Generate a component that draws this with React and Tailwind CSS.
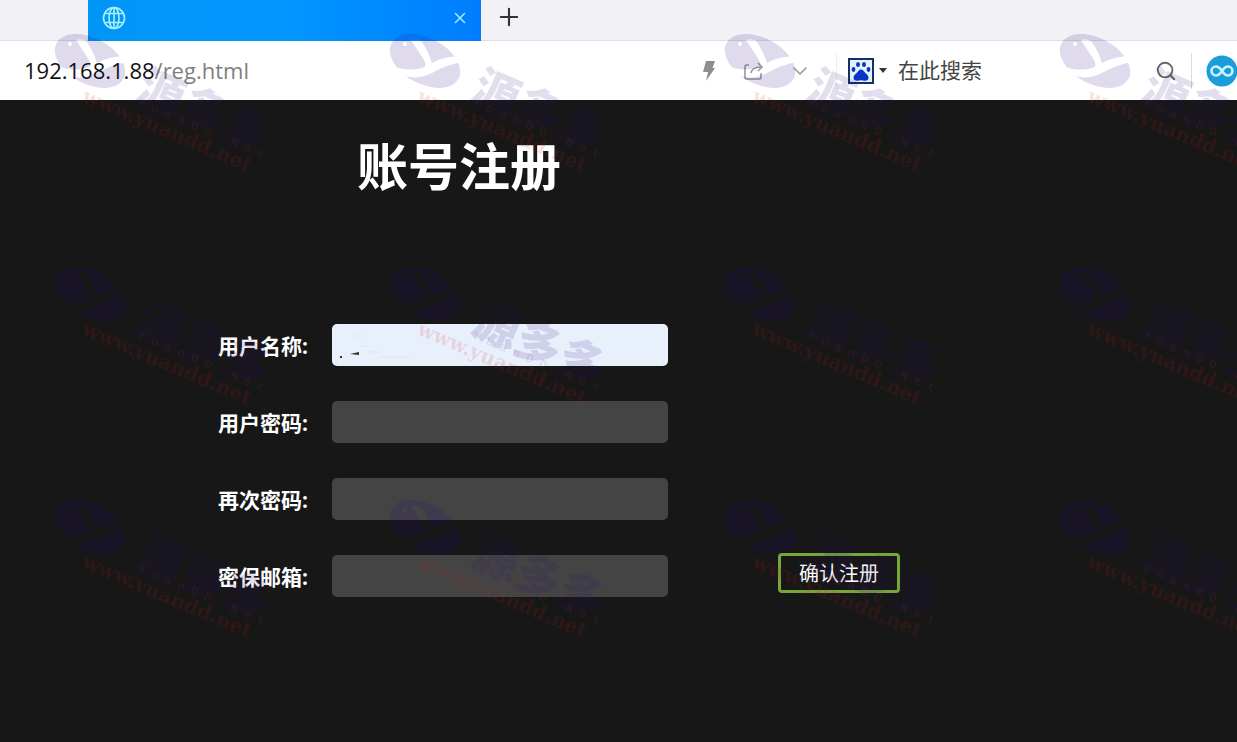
import { ChevronDown, Plus, Search, X } from "lucide-react";

const FIELDS = [
  { id: "username", label: "用户名称:", type: "text", filled: true },
  { id: "password", label: "用户密码:", type: "password" },
  { id: "password2", label: "再次密码:", type: "password" },
  { id: "email", label: "密保邮箱:", type: "email" },
];

const MARK_COLS = [55, 390, 725, 1060];
const MARK_ROWS = [34, 267, 500];

function GlobeIcon() {
  return (
    <svg viewBox="0 0 24 24" className="size-6" fill="none" stroke="#a9f0ff" strokeWidth="1.600" aria-hidden="true">
      <circle cx="12" cy="12" r="10.500" />
      <ellipse cx="12" cy="12" rx="5" ry="10.500" />
      <path d="M12 1.500v21M3 7.500h18M3 16.500h18" />
    </svg>
  );
}

function PawIcon() {
  return (
    <svg viewBox="0 0 26 26" className="size-[26px]" aria-hidden="true">
      <rect x="1" y="1" width="24" height="24" fill="#e4f2fc" stroke="#14306b" strokeWidth="2" />
      <g fill="#0b34c4">
        <ellipse cx="5.500" cy="11.500" rx="1.900" ry="2.400" />
        <ellipse cx="10" cy="6.500" rx="2" ry="2.500" />
        <ellipse cx="16" cy="6.500" rx="2" ry="2.500" />
        <ellipse cx="20.500" cy="11.500" rx="1.900" ry="2.400" />
        <path d="M13 11.500c-2 0-3 2-4.300 3.400C7 16.500 5.300 17.500 5.500 20c.2 2.300 2 3 4 2.700 1.200-.2 2.300-.5 3.500-.5s2.300.3 3.500.5c2 .3 3.800-.4 4-2.700.2-2.500-1.500-3.500-3.200-5.100C16 13.500 15 11.500 13 11.500z" />
      </g>
    </svg>
  );
}

function TabBar() {
  return (
    <div className="flex h-[41px] border-b border-[#dedee6] bg-[#f1f1f6] pl-[88px]">
      <div className="flex h-[41px] w-[393px] items-center justify-between bg-linear-to-r from-[#0096f6] via-[#0396ff] to-[#007dff] pb-1.5 pl-3.5 pr-3">
        <GlobeIcon />
        <button aria-label="关闭标签页">
          <X className="size-[18px] text-[#a4ecff]" strokeWidth={2} />
        </button>
      </div>
      <button aria-label="新标签页" className="ml-3.5 pb-1.5">
        <Plus className="size-7 text-[#333]" strokeWidth={1.8} />
      </button>
    </div>
  );
}

function AddressBar() {
  return (
    <div className="flex h-[59px] items-center bg-white pl-6 text-[#808080]">
      <div className="flex-1 text-[22px]">
        <span className="text-[#111]">192.168.1.88</span>/reg.html
      </div>
      <button aria-label="极速模式" className="mr-7">
        <svg viewBox="0 0 14 20" className="h-5 w-3.5" aria-hidden="true">
          <path d="M4 0h9L10.500 7H13L4 20l2-9H1z" fill="#8e8e8e" />
        </svg>
      </button>
      <button aria-label="分享" className="mr-6">
        <svg viewBox="0 0 20 18" className="h-[18px] w-5" fill="none" stroke="#999" strokeWidth="1.600" aria-hidden="true">
          <path d="M5 3H2.500Q1 3 1 4.500v11Q1 17 2.500 17h13q1.500 0 1.500-1.500V11" />
          <path d="M7 11c.5-4 3.500-6 11-6M14 1l4 4-4 4" />
        </svg>
      </button>
      <button aria-label="更多" className="mr-6">
        <ChevronDown className="size-6 text-[#999]" strokeWidth={1.6} />
      </button>
      <div className="flex h-9 w-[355px] items-center border-l border-[#eee] pl-[11px]">
        <button aria-label="选择搜索引擎" className="flex items-center gap-1">
          <PawIcon />
          <svg viewBox="0 0 10 6" className="h-1.5 w-2.5" aria-hidden="true">
            <path d="M1 0h8L5 5z" fill="#333" />
          </svg>
        </button>
        <input
          type="text"
          aria-label="搜索"
          placeholder="在此搜索"
          className="ml-2.5 min-w-0 flex-1 text-[21px] outline-none placeholder:text-[#444]"
        />
        <button aria-label="开始搜索" className="mr-3.5">
          <Search className="size-[22px] text-[#666]" strokeWidth={2} />
        </button>
      </div>
      <div className="flex h-9 w-[46px] items-center overflow-hidden border-l border-[#ddd] pl-3.5">
        <svg viewBox="0 0 32 32" className="size-8 shrink-0" aria-hidden="true">
          <circle cx="16" cy="16" r="15.500" fill="#1b9ddb" />
          <path
            d="M16 16c-2-3-3.500-4.500-6-4.500a4.500 4.500 0 0 0 0 9c2.500 0 4-1.500 6-4.500s3.500-4.500 6-4.500a4.500 4.500 0 0 1 0 9c-2.500 0-4-1.500-6-4.500z"
            fill="none"
            stroke="#c9f3ff"
            strokeWidth="2.600"
          />
        </svg>
      </div>
    </div>
  );
}

function Field({ id, label, type, filled }) {
  return (
    <div className="flex items-center">
      <label htmlFor={id} className="w-[114px] pt-1 text-[21px] font-bold text-white">
        {label}
      </label>
      <div className="relative">
        <input
          id={id}
          type={type}
          className={
            filled
              ? "block h-[42px] w-[336px] rounded-[5px] bg-[#e8f0fc] px-2 text-black"
              : "block h-[42px] w-[336px] rounded-[5px] bg-[#444] px-2 text-white"
          }
        />
        {filled && (
          <svg viewBox="0 0 80 42" className="pointer-events-none absolute left-0 top-0 h-[42px] w-20" aria-hidden="true">
            <path d="M8 32h2v2H8zM18 30l9-2v3z" fill="#333" />
            <path d="M22 12h8M36 28h10M48 33h30M30 22h8" stroke="#dfe4f0" />
          </svg>
        )}
      </div>
    </div>
  );
}

// Tilted logo + site name, repeated over the whole window
function Watermark() {
  return (
    <svg className="pointer-events-none absolute inset-0 size-full" aria-hidden="true">
      <defs>
        <mask id="logo-cut" maskUnits="userSpaceOnUse" x="-10" y="-10" width="100" height="80">
          <rect x="-10" y="-10" width="100" height="80" fill="#fff" />
          <circle cx="15" cy="10" r="2" fill="#000" />
          <path d="M0 31Q18 39 35 33Q36 30 34 26L21 6Q26 4 31 7Q38 16 42 29Q54 22 72 22V28Q56 31 44 38Q28 47 12 41Q6 39 0 33z" fill="#000" />
        </mask>
      </defs>
      {MARK_ROWS.map((y) =>
        MARK_COLS.map((x) => (
          <g key={`${x}-${y}`} transform={`translate(${x} ${y})`}>
            <g mask="url(#logo-cut)">
              <ellipse cx="35" cy="27" rx="38" ry="23" transform="rotate(28 35 27)" fill="#2d0888" opacity="0.15" />
            </g>
            <text transform="translate(79 65) rotate(23)" className="text-[46px] font-black" fill="#2d0878" opacity="0.13">
              源多多
            </text>
            <text transform="translate(82 71) rotate(23)" className="font-['Liberation_Mono'] text-[12px]" fill="#b03050" opacity="0.16">
              Y u a n D D . N e t
            </text>
            <text transform="translate(26 67) rotate(23)" className="font-['DejaVu_Serif'] text-[20px] font-bold" fill="#d01818" opacity="0.13">
              www.yuandd.net
            </text>
          </g>
        ))
      )}
    </svg>
  );
}

export default function App() {
  return (
    <div className="relative flex min-h-screen flex-col overflow-hidden font-['Open_Sans','Noto_Sans_CJK_SC',sans-serif]">
      <TabBar />
      <AddressBar />
      <main className="flex-1 bg-[#171717] pb-16 pt-8">
        <h1 className="pl-[357px] text-[51px] leading-[68px] font-bold text-white">账号注册</h1>
        <form className="mt-[124px] flex items-end gap-[110px] pl-[218px]" onSubmit={(e) => e.preventDefault()}>
          <div className="flex flex-col gap-[35px]">
            {FIELDS.map((f) => (
              <Field key={f.id} {...f} />
            ))}
          </div>
          <button
            type="submit"
            className="mb-1 h-10 w-[122px] rounded-[4px] border-3 border-[#76a53c] bg-[#171717] pt-0.5 text-[20px] leading-8 text-white"
          >
            确认注册
          </button>
        </form>
      </main>
      <Watermark />
    </div>
  );
}
